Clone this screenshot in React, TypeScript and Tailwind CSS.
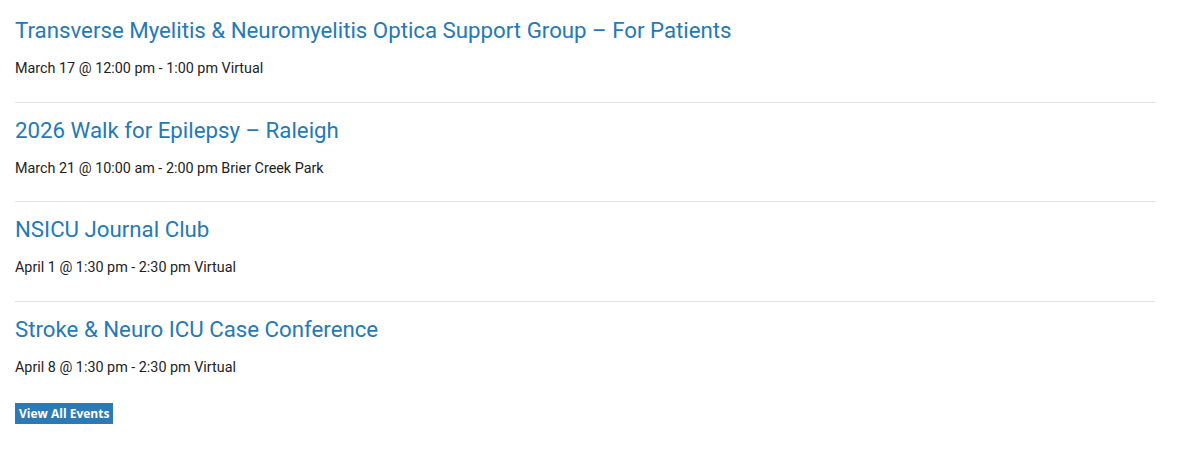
import React from "react";

const events = [
  { title: "Transverse Myelitis & Neuromyelitis Optica Support Group – For Patients", meta: "March 17 @ 12:00 pm - 1:00 pm Virtual" },
  { title: "2026 Walk for Epilepsy – Raleigh", meta: "March 21 @ 10:00 am - 2:00 pm Brier Creek Park" },
  { title: "NSICU Journal Club", meta: "April 1 @ 1:30 pm - 2:30 pm Virtual" },
  { title: "Stroke & Neuro ICU Case Conference", meta: "April 8 @ 1:30 pm - 2:30 pm Virtual" },
];

export default function App() {
  return (
    <div className="w-[1180px] h-[450px] bg-white pt-[3px] px-[15px]" style={{ fontFamily: "Roboto, 'Liberation Sans', sans-serif" }}>
      <div className="w-[1140px]">
        {events.map((e, i) => (
          <div key={i} className={`pt-[12px] ${i < events.length - 1 ? "pb-[22.5px] border-b border-[#e2e2e2]" : "pb-0"}`}>
            <a className="block text-[22.25px] leading-[30px] text-[#2479b7]" href="#">{e.title}</a>
            <div className="mt-[14px] text-[14.35px] leading-[20px] text-[#222]">{e.meta}</div>
          </div>
        ))}
        <div className="mt-[23px]">
          <a href="#" className="inline-block bg-[#2a7ab8] text-white text-[12px] font-bold leading-[21px] px-[4px]" style={{ fontFamily: "'Open Sans', sans-serif" }}>View All Events</a>
        </div>
      </div>
    </div>
  );
}
